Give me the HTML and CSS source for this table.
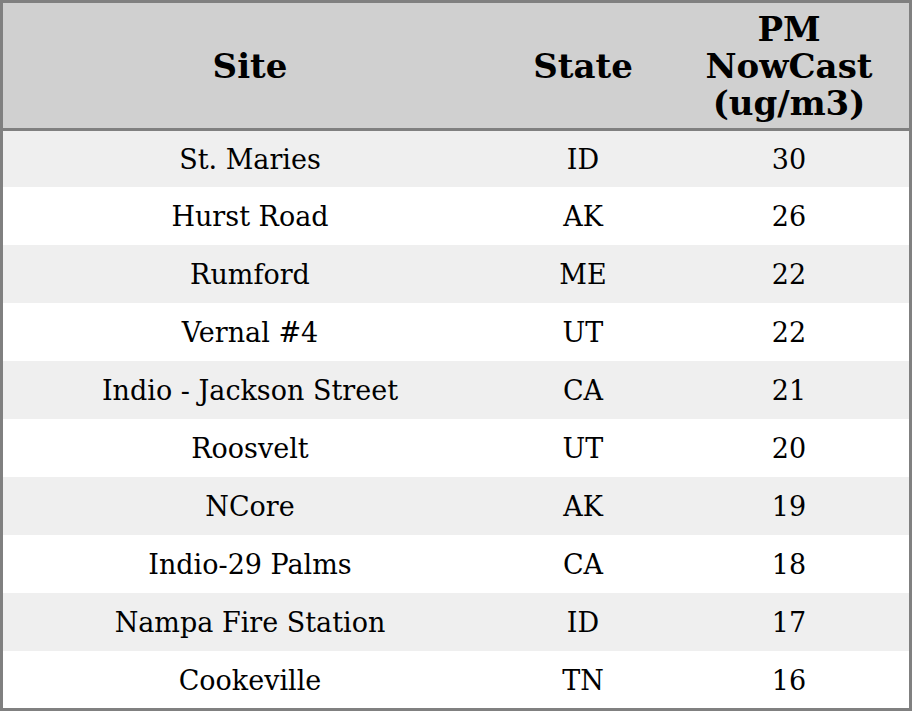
FILE: index.html
```html
<!DOCTYPE html>
<html>
<head>
<meta charset="utf-8">
<link rel="stylesheet" href="styles.css">
</head>
<body>
<table class="aq">
  <colgroup>
    <col class="c-site">
    <col class="c-state">
    <col class="c-pm">
  </colgroup>
  <thead>
    <tr><th>Site</th><th>State</th><th>PM<br>NowCast<br>(ug/m3)</th></tr>
  </thead>
  <tbody>
    <tr><td>St. Maries</td><td>ID</td><td>30</td></tr>
    <tr><td>Hurst Road</td><td>AK</td><td>26</td></tr>
    <tr><td>Rumford</td><td>ME</td><td>22</td></tr>
    <tr><td>Vernal #4</td><td>UT</td><td>22</td></tr>
    <tr><td>Indio - Jackson Street</td><td>CA</td><td>21</td></tr>
    <tr><td>Roosvelt</td><td>UT</td><td>20</td></tr>
    <tr><td>NCore</td><td>AK</td><td>19</td></tr>
    <tr><td>Indio-29 Palms</td><td>CA</td><td>18</td></tr>
    <tr><td>Nampa Fire Station</td><td>ID</td><td>17</td></tr>
    <tr><td>Cookeville</td><td>TN</td><td>16</td></tr>
  </tbody>
</table>
</body>
</html>
```
FILE: styles.css
```css
html, body {
  margin: 0;
  padding: 0;
  background: #ffffff;
}
.aq {
  width: 912px;
  border-collapse: separate;
  border-spacing: 0;
  border: 3px solid #808080;
  table-layout: fixed;
  font-family: "DejaVu Serif", serif;
  color: #000;
}
.c-site { width: 494px; }
.c-state { width: 172px; }
.c-pm { width: 240px; }
.aq th {
  background: #d0d0d0;
  font-weight: bold;
  font-size: 34px;
  line-height: 37px;
  height: 125px;
  padding: 2px 0 0;
  text-align: center;
  vertical-align: middle;
  border-bottom: 3px solid #808080;
  box-sizing: border-box;
}
.aq thead tr { height: 128px; }
.aq td {
  font-size: 27px;
  line-height: 30px;
  padding: 2px 0 0;
  text-align: center;
  vertical-align: middle;
}
.aq tbody tr { height: 58px; }
.aq tbody tr:first-child { height: 56px; }
.aq tbody tr:last-child { height: 57px; }
.aq tbody tr:nth-child(odd) { background: #efefef; }
.aq tbody tr:nth-child(even) { background: #ffffff; }
```
